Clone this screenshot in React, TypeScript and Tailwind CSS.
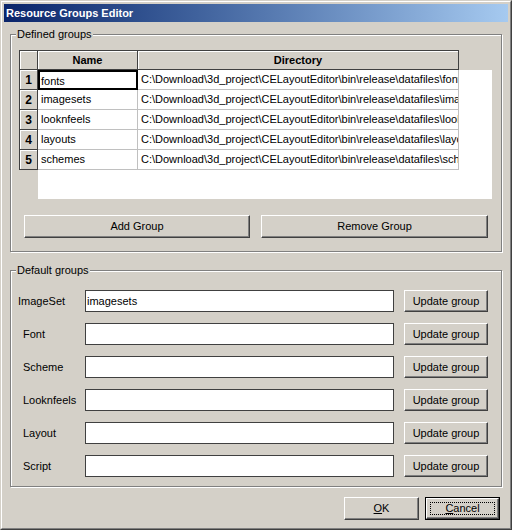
import type { ReactNode } from "react";
import clsx from "clsx";

const groups = [
  { name: "fonts", dir: "C:\\Download\\3d_project\\CELayoutEditor\\bin\\release\\datafiles\\fonts" },
  { name: "imagesets", dir: "C:\\Download\\3d_project\\CELayoutEditor\\bin\\release\\datafiles\\imagesets" },
  { name: "looknfeels", dir: "C:\\Download\\3d_project\\CELayoutEditor\\bin\\release\\datafiles\\looknfeels" },
  { name: "layouts", dir: "C:\\Download\\3d_project\\CELayoutEditor\\bin\\release\\datafiles\\layouts" },
  { name: "schemes", dir: "C:\\Download\\3d_project\\CELayoutEditor\\bin\\release\\datafiles\\schemes" },
];

const defaults = [
  { label: "ImageSet", value: "imagesets", indent: "pl-[7px]" },
  { label: "Font", value: "", indent: "pl-[12px]" },
  { label: "Scheme", value: "", indent: "pl-[12px]" },
  { label: "Looknfeels", value: "", indent: "pl-[12px]" },
  { label: "Layout", value: "", indent: "pl-[12px]" },
  { label: "Script", value: "", indent: "pl-[12px]" },
];

function Button({ children, className }: { children: ReactNode; className?: string }) {
  return (
    <button
      type="button"
      className={clsx(
        "flex items-center justify-center border border-[#404040] border-t-white border-l-white bg-[#d4d0c8] text-black shadow-[inset_-1px_-1px_0_#808080]",
        className,
      )}
    >
      {children}
    </button>
  );
}

function GroupBox({ title, className, children }: { title: string; className?: string; children: ReactNode }) {
  return (
    <div
      className={clsx(
        "relative ml-[6px] w-[492px] border border-[#808080] shadow-[inset_1px_1px_0_#fff,1px_1px_0_#fff]",
        className,
      )}
    >
      <span className="absolute -top-[8px] left-[5px] bg-[#d4d0c8] px-[1px] leading-[14px]">{title}</span>
      {children}
    </div>
  );
}

const headerCell =
  "flex items-center justify-center border-r border-b border-[#404040] bg-[#d4d0c8] font-bold shadow-[inset_1px_1px_0_#fff]";

function GroupsTable() {
  return (
    <div className="ml-[8px] mt-[15px] flex h-[149px] w-[473px] flex-col bg-[#d4d0c8]">
      <div className="flex h-[20px] shrink-0">
        <div className={clsx(headerCell, "w-[19px] border-l border-t")} />
        <div className={clsx(headerCell, "w-[100px] border-t")}>Name</div>
        <div className={clsx(headerCell, "w-[321px] border-t")}>Directory</div>
      </div>
      <div className="flex flex-1">
        <div className="flex w-[19px] flex-col">
          {groups.map((g, i) => (
            <div key={g.name} className={clsx(headerCell, "h-[20px] border-l text-[12px]")}>
              {i + 1}
            </div>
          ))}
        </div>
        <div className="flex-1 bg-white">
          {groups.map((g, i) => (
            <div key={g.name} className="flex h-[20px]">
              <div
                className={clsx(
                  "w-[100px] overflow-hidden whitespace-nowrap leading-[19px]",
                  i === 0 ? "border-2 border-black pl-[1px] leading-[16px]" : "border-r border-b border-[#c0c0c0] pl-[3px]",
                )}
              >
                {g.name}
              </div>
              <div className="w-[321px] overflow-hidden whitespace-nowrap border-r border-b border-[#c0c0c0] pl-[3px] leading-[19px]">
                {g.dir}
              </div>
            </div>
          ))}
        </div>
      </div>
    </div>
  );
}

export default function App() {
  return (
    <div className="h-[530px] w-[512px] border border-[#404040] border-t-[#d4d0c8] border-l-[#d4d0c8] bg-[#d4d0c8] font-['Liberation_Sans',Arial,sans-serif] text-[11px] text-black">
      <div className="flex h-full flex-col border border-[#808080] border-t-white border-l-white p-[2px]">
        <div className="flex h-[18px] shrink-0 items-center bg-gradient-to-r from-[#0a246a] to-[#a6caf0] pl-[2px] font-bold text-white">
          Resource Groups Editor
        </div>

        <GroupBox title="Defined groups" className="mt-[12px] h-[218px]">
          <GroupsTable />
          <div className="mt-[16px] flex gap-[11px] px-[13px]">
            <Button className="h-[23px] w-[226px]">Add Group</Button>
            <Button className="h-[23px] w-[227px]">Remove Group</Button>
          </div>
        </GroupBox>

        <GroupBox title="Default groups" className="mt-[18px] h-[217px]">
          <div className="flex flex-col gap-[11px] pt-[19px]">
            {defaults.map((d) => (
              <div key={d.label} className="flex h-[22px] items-center">
                <div className={clsx("w-[74px]", d.indent)}>{d.label}</div>
                <div className="h-[22px] w-[309px] border border-[#404040] bg-white pl-[1px] pt-[3px] leading-[14px]">
                  {d.value}
                </div>
                <Button className="ml-[10px] h-[22px] w-[84px]">Update group</Button>
              </div>
            ))}
          </div>
        </GroupBox>

        <div className="mt-[10px] flex justify-end gap-[6px] pr-[8px]">
          <Button className="h-[23px] w-[75px]">
            <span className="underline">O</span>K
          </Button>
          <button type="button" className="h-[23px] w-[75px] border border-black bg-[#d4d0c8] p-0">
            <span className="relative flex h-full w-full items-center justify-center border border-[#404040] border-t-white border-l-white shadow-[inset_-1px_-1px_0_#808080]">
              <span className="absolute inset-[3px] border border-dotted border-black" />
              <span>
                <span className="underline">C</span>ancel
              </span>
            </span>
          </button>
        </div>
      </div>
    </div>
  );
}
